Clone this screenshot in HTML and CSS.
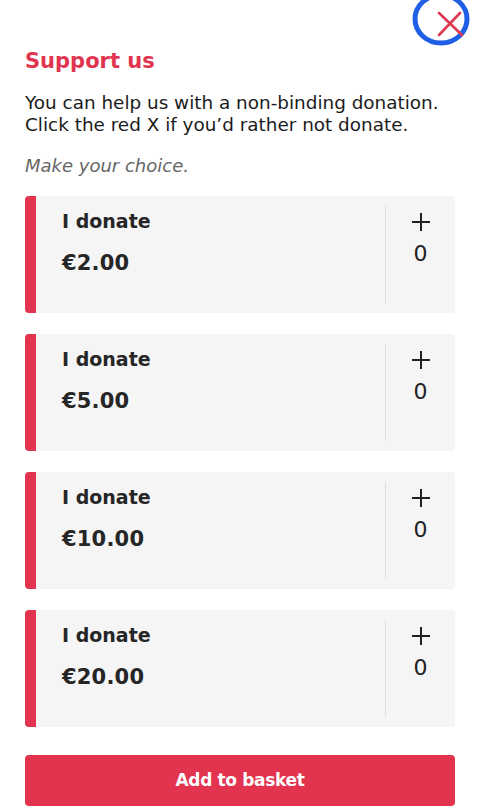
FILE: index.html
```html
<!DOCTYPE html>
<html lang="en">
<head>
<meta charset="utf-8">
<link rel="stylesheet" href="styles.css">
</head>
<body>
<div class="page">
  <button class="close" aria-label="Close">
    <svg width="64" height="52" viewBox="0 0 64 52">
      <ellipse cx="33" cy="19" rx="26" ry="24" fill="none" stroke="#1f5fe6" stroke-width="5"/>
      <path d="M31 13 L54 35 M31 35 L52 13" stroke="#dc3a52" stroke-width="2.6" stroke-linecap="round"/>
    </svg>
  </button>
  <h1 class="title">Support us</h1>
  <p class="intro">You can help us with a non-binding donation.<br>Click the red X if you’d rather not donate.</p>
  <p class="hint">Make your choice.</p>
  <div class="cards">
    <div class="card">
      <div class="card-body"><div class="label">I donate</div><div class="amount">€2.00</div></div>
      <div class="card-side"><svg class="plus" width="18" height="18" viewBox="0 0 18 18"><path d="M9 0V18M0 9H18" stroke="#222" stroke-width="2"/></svg><span class="count">0</span></div>
    </div>
    <div class="card">
      <div class="card-body"><div class="label">I donate</div><div class="amount">€5.00</div></div>
      <div class="card-side"><svg class="plus" width="18" height="18" viewBox="0 0 18 18"><path d="M9 0V18M0 9H18" stroke="#222" stroke-width="2"/></svg><span class="count">0</span></div>
    </div>
    <div class="card">
      <div class="card-body"><div class="label">I donate</div><div class="amount">€10.00</div></div>
      <div class="card-side"><svg class="plus" width="18" height="18" viewBox="0 0 18 18"><path d="M9 0V18M0 9H18" stroke="#222" stroke-width="2"/></svg><span class="count">0</span></div>
    </div>
    <div class="card">
      <div class="card-body"><div class="label">I donate</div><div class="amount">€20.00</div></div>
      <div class="card-side"><svg class="plus" width="18" height="18" viewBox="0 0 18 18"><path d="M9 0V18M0 9H18" stroke="#222" stroke-width="2"/></svg><span class="count">0</span></div>
    </div>
  </div>
  <button class="submit">Add to basket</button>
</div>
</body>
</html>
```
FILE: styles.css
```css
* { box-sizing: border-box; }
html, body { margin: 0; padding: 0; background: #fff; }
body { font-family: "DejaVu Sans", "Liberation Sans", sans-serif; color: #1c1c1c; }
.page { position: relative; padding: 0 25px; width: 480px; height: 809px; overflow: hidden; }
.close { position: absolute; top: 0; left: 408px; padding: 0; border: 0; background: none; width: 64px; height: 52px; }
.close svg { display: block; }
.title { margin: 0; padding-top: 47px; font-size: 21px; font-weight: 700; color: #e0344f; line-height: 28px; }
.intro { margin: 17px 0 0; font-size: 18.4px; line-height: 22px; font-weight: 400; color: #1c1c1c; }
.hint { margin: 19px 0 0; font-size: 18px; line-height: 22px; font-style: italic; color: #666; }
.cards { display: flex; flex-direction: column; gap: 21px; margin-top: 19px; }
.card { display: flex; height: 117px; background: #f5f5f5; border-radius: 4px; border-left: 11px solid #e3344f; }
.card-body { flex: 1; padding: 12px 0 0 26px; }
.label { font-size: 19px; font-weight: 700; line-height: 26px; color: #262626; }
.amount { margin-top: 16px; font-size: 21px; font-weight: 700; line-height: 26px; color: #262626; letter-spacing: 0.2px; }
.card-side { width: 70px; margin: 10px 0; border-left: 1px solid #dedede; display: flex; flex-direction: column; align-items: center; padding-top: 7px; }
.plus { display: block; }
.count { font-size: 22px; line-height: 26px; color: #222; margin-top: 10px; }
.submit { display: block; width: 100%; height: 51px; margin-top: 28px; border: 0; border-radius: 4px; background: #e3344f; color: #fff; font-family: "DejaVu Sans", "Liberation Sans", sans-serif; font-size: 17px; font-weight: 700; letter-spacing: -0.35px; padding: 0 0 2px; }
```
